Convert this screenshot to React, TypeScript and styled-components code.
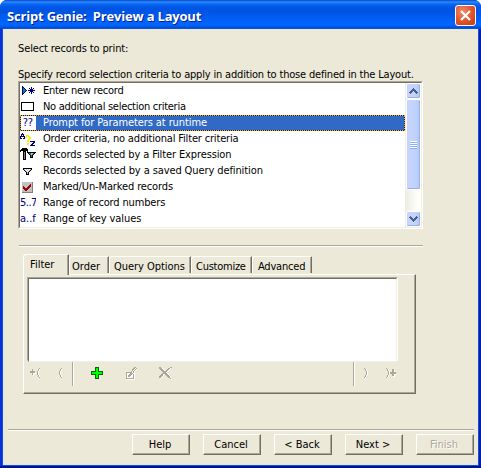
import React from "react";
import styled, { createGlobalStyle, css } from "styled-components";

const Global = createGlobalStyle`
  * { box-sizing: border-box; }
  body { margin: 0; background: #fff; overflow: hidden; font: 11px/16px "DejaVu Sans Condensed", "DejaVu Sans", sans-serif; font-stretch: condensed; color: #000; cursor: default; }
`;

const Dialog = styled.div`
  width: 481px; height: 468px; display: flex; flex-direction: column;
  background: linear-gradient(90deg, #0831d9 50%, #001ea0 50%); border-radius: 7px 7px 0 0; overflow: hidden;
  box-shadow: inset 0 -2px 0 #00138c;
`;
const TitleBar = styled.header`
  height: 29px; flex: none; display: flex; align-items: center; justify-content: space-between;
  padding: 2px 5px 0 7px;
  background: linear-gradient(#0847c9 0, #2b8bff 2px, #0a67f5 4px, #0054e3 8px, #0055e5 13px, #0062fb 21px, #0066ff 25px, #0054e0 27px, #003dce 29px);
`;
const Title = styled.h1`
  margin: 0; font: bold 13px/20px "Open Sans", sans-serif; color: #fff; white-space: pre;
  letter-spacing: -0.19px; text-shadow: 1px 1px 0 #0a1f8a;
`;
const CloseButton = styled.button`
  width: 21px; height: 21px; padding: 0; border: 1px solid #fff; border-radius: 3px; display: grid; place-items: center;
  background: radial-gradient(circle at 35% 30%, #ef8b6c, #e1512a 55%, #c03c12);
`;
const Body = styled.main`
  margin: 0 3px 3px; flex: 1; background: #ece9d8; display: flex; flex-direction: column; padding: 0 4px 0 15px;
  box-shadow: 0 0 0 1px #0850e8;
`;
const Text = styled.span<{ $s?: number }>`
  white-space: pre; letter-spacing: ${(p) => p.$s ?? 0}px;
`;
const Heading = styled.p<{ $gap: number; $h: number }>`
  margin: ${(p) => p.$gap}px 0 0 0; height: ${(p) => p.$h}px; white-space: pre;
`;
const ListBox = styled.div`
  width: 405px; height: 148px; display: flex; background: #fff;
  border: 1px solid; border-color: #aca899 #fff #fff #aca899;
`;
const ListInner = styled.div`
  flex: 1; display: flex; border: 1px solid; border-color: #716f64 #f1efe2 #f1efe2 #716f64;
`;
const Rows = styled.div`flex: 1;`;
const Row = styled.div<{ $selected?: boolean }>`
  height: 16px; display: flex; position: relative;
  ${(p) => p.$selected && css`
    color: #fff;
    &::before, &::after { content: ""; position: absolute; inset: 0; border: 1px solid #1c1c28; }
    &::after { border: 1px dotted #f0a63a; }
  `}
`;
const IconCell = styled.div`width: 16px; height: 16px; flex: none; color: #000080; white-space: nowrap; line-height: 15px;`;
const RowLabel = styled.div<{ $selected?: boolean }>`
  flex: 1; padding-left: 7px; line-height: 15px; background: ${(p) => (p.$selected ? "#316ac5" : "#fff")};
`;
const Scrollbar = styled.div`
  width: 16px; display: flex; flex-direction: column; background: linear-gradient(90deg, #eeede5, #fefefb 75%); border-left: 1px solid #eeede5;
`;
const scrollFace = css`
  border: 1px solid #fff; border-radius: 2px; background: linear-gradient(90deg, #c8d6fb, #c1d3fd 60%, #b3c8f7);
  box-shadow: inset -1px -1px 0 #98b1e4, inset 1px 1px 0 #c3d3fd; display: grid; place-items: center;
`;
const ScrollButton = styled.div`${scrollFace} height: 16px; flex: none;`;
const Thumb = styled.div`${scrollFace} height: 91px; flex: none; margin-bottom: auto;`;
const Rule = styled.hr<{ $w: number; $gap: number; $left?: number }>`
  width: ${(p) => p.$w}px; height: 2px; flex: none; border: 0; background: linear-gradient(#aca899 50%, #fff 50%);
  margin: ${(p) => p.$gap}px 0 0 ${(p) => p.$left ?? 0}px;
`;
const Tabs = styled.div`
  display: flex; align-items: flex-end; height: 20px; margin: 7px 0 0 5px;
`;
const Tab = styled.div<{ $w: number; $pad: number; $active?: boolean }>`
  width: ${(p) => p.$w}px; height: ${(p) => (p.$active ? 21 : 17)}px; margin-bottom: ${(p) => (p.$active ? -1 : 1)}px;
  padding-left: ${(p) => p.$pad}px; line-height: ${(p) => (p.$active ? 20 : 19)}px; background: #ece9d8; position: relative; z-index: ${(p) => (p.$active ? 1 : 0)};
  border: 1px solid; border-color: #fff #716f64 transparent #fff; border-bottom: 0;
  border-radius: 3px 1px 0 0; box-shadow: inset -1px 0 0 #aca899;
`;
const Panel = styled.section`
  width: 393px; height: 120px; margin-left: 5px; padding: 2px 2px 0 3px;
  border: 1px solid; border-color: #fff #716f64 #716f64 #fff; box-shadow: inset -1px -1px 0 #aca899;
`;
const FilterBox = styled.div`
  width: 371px; height: 84px; background: #fff; border: 1px solid; border-color: #aca899 #fff #fff #aca899;
  &::before { content: ""; display: block; height: 100%; border: 1px solid; border-color: #716f64 #f1efe2 #f1efe2 #716f64; }
`;
const Tools = styled.div`display: flex; height: 24px; width: 371px; margin-top: 1px; align-items: center;`;
const Tool = styled.div<{ $w: number }>`
  width: ${(p) => p.$w}px; height: 24px; padding-bottom: 2px; display: flex; align-items: center; justify-content: center;
`;
const ToolRule = styled.div`width: 2px; height: 24px; background: linear-gradient(90deg, #aca899 50%, #fff 50%);`;
const Spacer = styled.div`flex: 1;`;
const Buttons = styled.footer`display: flex; gap: 13px; margin: 3px 0 0 114px;`;
const Button = styled.button`
  width: 58px; height: 21px; padding: 1px 2px 0 0; font: inherit; line-height: 16px; color: #000; background: #ece9d8;
  border: 1px solid; border-color: #fff #716f64 #716f64 #fff; box-shadow: inset -1px -1px 0 #aca899; white-space: nowrap;
  &:disabled { color: #aca899; text-shadow: 1px 1px 0 #fff; }
`;
const Svg = styled.svg`display: block; flex: none; overflow: visible;`;

const palette: Record<string, string> = {
  k: "#000", n: "#000080", t: "#008080", y: "#f4f000", g: "#c0c0c0", d: "#808080", r: "#a00000",
  G: "#00ff00", D: "#006a00", a: "#aca899", w: "#fff", s: "#4d6185", b: "#8fb0f0",
};
function Pixels({ map, w, h, x = 0, y = 0 }: { map: string[]; w: number; h: number; x?: number; y?: number }) {
  return (
    <Svg width={w} height={h} shapeRendering="crispEdges">
      {map.flatMap((line, j) =>
        [...line].map((c, i) => palette[c] ? <rect key={`${i}-${j}`} x={x + i} y={y + j} width="1" height="1" fill={palette[c]} /> : null)
      )}
    </Svg>
  );
}

const funnel = ["kkkkkkkkk", "kgwgwgwgk", ".kgwgwgk.", "..kgwgk..", "...kgk...", "...kgk...", "...kkk..."];
const newRecord = ["n............", "nn.......n...", "ntn....n.n.n.", "nttn....nnn..", "ntttn.nnnnnnn", "nttn....nnn..", "ntn....n.n.n.", "nn.......n...", "n............"];
const box = ["kkkkkkkkkkkkk", ...Array(7).fill("k...........k"), "kkkkkkkkkkkkk"];
const orderIcon = [
  "..n.............", ".nnn............", ".n.n..yyy.......", "nnnnn.y.yy......", "n...nyy..yy.....", "nn.nn....yy.....", "........yy......", ".......yy.......",
  ".......yy.nnnnn.", ".............nn.", ".......yy...nn..", ".......yy..nn...", "..........nnnnn.",
];
const expression = [
  "..kkkkk.........", ".kkkkkkk........", "kkkkkkkk........", "k..kkk.k........", "...kdk.kkkkkkkkk", "...kdk..kttggtk.", "...kdk...ktgtk..", "...kdk....ktk...", "...kdk....ktk...", "...kdk....kkk...", "...kdk..........", "...kkk..........",
];
const checked = [
  "ggggggggggd", "ggggggggggd", "ggggggggrgd", "gggggggrrgd", "grggggrrrgd", "grrggrrrggd", "grrrrrrgggd", "ggrrrrggggd", "gggrrgggggd", "ggggggggggd", "ddddddddddd",
];
const openPlus = [".........a", "..a.....aw", "..aw....aw", "aaaaa..aw.", "aaaaaw.aw.", "..awww.aw.", "..aw...aw.", "...w....aw", "........aw", ".........a"];
const open = ["...a", "..aw", "..aw", ".aw.", ".aw.", ".aw.", ".aw.", "..aw", "..aw", "...a"];
const close = ["a...", ".aw.", ".aw.", "..aw", "..aw", "..aw", "..aw", ".aw.", ".aw.", "aw.."];
const closePlus = ["a.........", ".aw...aa..", ".aw...aaw.", "..aw..aaw.", "..awaaaaaa", "..awaaaaaa", "..aw..aaww", ".aw...aaw.", ".aw....ww.", "aw........"];
const add = ["....DDDD....", "....DGGD....", "....DGGD....", "....DGGD....", "DDDDDGGDDDDD", "DGGGGGGGGGGD", "DGGGGGGGGGGD", "DDDDDGGDDDDD", "....DGGD....", "....DGGD....", "....DGGD....", "....DDDD...."];
const edit = ["........aa.", ".......aawa", "......aawaw", "......awaw.", ".....awaw..", "aaaaaawaw..", "awwwaaaww..", "awwaaawaw..", "awaaawwaw..", "awaawwwaw..", "awwwwwwaw..", "aaaaaaaaw..", ".wwwwwwww.."];
const remove = ["aa.........aa", "aaaw.....aaw.", ".aaaw...aaw..", "..aaaw.aaw...", "...aaaaaw....", "....aaaw.....", "...aaaaaw....", "..aaw.aaaw...", ".aaaw..aaaw..", "aaaw....aaaw.", "aaw......aaw.", ".w.........a.", "............w"];
const chevron = ["....s....", "...sss...", "..sssss..", ".sss.sss.", "sss...sss", ".s.....s."];
const grip = ["wwwwwww", "bbbbbbb", "wwwwwww", "bbbbbbb", "wwwwwww", "bbbbbbb", "wwwwwww", "bbbbbbb"];

const items: { label: string; s: number; icon: React.ReactNode }[] = [
  { label: "Enter new record", s: -0.28, icon: <Pixels w={16} h={16} x={2} y={3} map={newRecord} /> },
  { label: "No additional selection criteria", s: -0.28, icon: <Pixels w={16} h={16} x={1} y={3} map={box} /> },
  { label: "Prompt for Parameters at runtime", s: -0.1, icon: <Text $s={-0.3}> ??</Text> },
  { label: "Order criteria, no additional Filter criteria", s: -0.17, icon: <Pixels w={16} h={16} y={2} map={orderIcon} /> },
  { label: "Records selected by a Filter Expression", s: -0.12, icon: <Pixels w={16} h={16} y={1} map={expression} /> },
  { label: "Records selected by a saved Query definition", s: -0.1, icon: <Pixels w={16} h={16} x={3} y={5} map={funnel} /> },
  { label: "Marked/Un-Marked records", s: -0.13, icon: <Pixels w={16} h={16} x={2} y={3} map={checked} /> },
  { label: "Range of record numbers", s: -0.15, icon: <Text $s={-0.5}>5..7</Text> },
  { label: "Range of key values", s: -0.08, icon: <Text>a..f</Text> },
];

export default function App() {
  return (
    <>
      <Global />
      <Dialog>
        <TitleBar>
          <Title>{"Script Genie:  Preview a Layout"}</Title>
          <CloseButton aria-label="Close">
            <Svg width="11" height="11"><path d="M1 1L10 10M10 1L1 10" stroke="#fff" strokeWidth="2.2" /></Svg>
          </CloseButton>
        </TitleBar>
        <Body>
          <Heading $gap={12} $h={16}><Text $s={-0.12}>Select records to print:</Text></Heading>
          <Heading $gap={10} $h={14}><Text $s={-0.18}>Specify record selection criteria to apply in addition to those defined in the Layout.</Text></Heading>
          <ListBox>
            <ListInner>
              <Rows>
                {items.map((it, i) => (
                  <Row key={it.label} $selected={i === 2}>
                    <IconCell>{it.icon}</IconCell>
                    <RowLabel $selected={i === 2}><Text $s={it.s}>{it.label}</Text></RowLabel>
                  </Row>
                ))}
              </Rows>
              <Scrollbar>
                <ScrollButton><Pixels w={9} h={6} map={chevron} /></ScrollButton>
                <Thumb><Pixels w={7} h={8} map={grip} /></Thumb>
                <ScrollButton><Pixels w={9} h={6} map={[...chevron].reverse()} /></ScrollButton>
              </Scrollbar>
            </ListInner>
          </ListBox>
          <Rule $w={404} $gap={16} $left={1} />
          <Tabs>
            <Tab $w={46} $pad={6} $active><Text>Filter</Text></Tab>
            <Tab $w={40} $pad={2}><Text>Order</Text></Tab>
            <Tab $w={82} $pad={4}><Text $s={-0.05}>Query Options</Text></Tab>
            <Tab $w={61} $pad={4}><Text $s={-0.25}>Customize</Text></Tab>
            <Tab $w={60} $pad={5}><Text $s={-0.2}>Advanced</Text></Tab>
          </Tabs>
          <Panel>
            <FilterBox />
            <Tools>
              <Tool $w={15}><Pixels w={10} h={10} map={openPlus} /></Tool>
              <Tool $w={30}><Pixels w={4} h={10} x={3} map={open} /></Tool>
              <ToolRule />
              <Tool $w={46}><Pixels w={12} h={12} map={add} /></Tool>
              <Tool $w={22}><Pixels w={11} h={13} map={edit} /></Tool>
              <Tool $w={46}><Pixels w={13} h={13} map={remove} /></Tool>
              <Spacer />
              <ToolRule />
              <Tool $w={29}><Pixels w={4} h={10} x={-4} map={close} /></Tool>
              <Tool $w={14}><Pixels w={10} h={10} map={closePlus} /></Tool>
            </Tools>
          </Panel>
          <Rule $w={466} $gap={35} $left={-10} />
          <Buttons>
            <Button>Help</Button>
            <Button>Cancel</Button>
            <Button>{"< Back"}</Button>
            <Button>{"Next >"}</Button>
            <Button disabled>Finish</Button>
          </Buttons>
        </Body>
      </Dialog>
    </>
  );
}
